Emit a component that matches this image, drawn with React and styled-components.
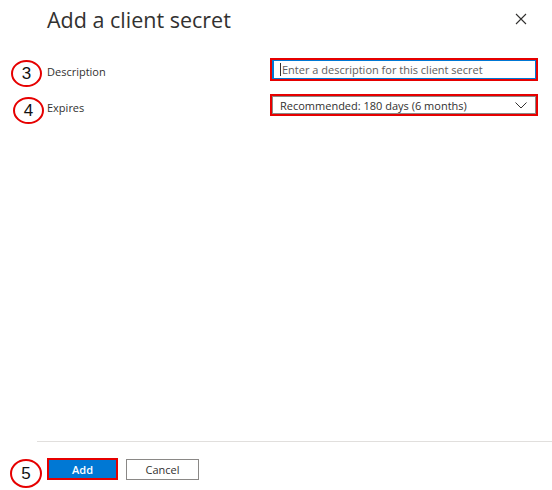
import React from "react";
import styled, { createGlobalStyle } from "styled-components";

const Global = createGlobalStyle`
  html, body { margin: 0; padding: 0; background: #fff; }
  body { font-family: "Segoe UI", "Open Sans", "Noto Sans", sans-serif; color: #323130; }
  #root { height: 100vh; }
`;

const Panel = styled.div`
  height: 100%;
  display: flex;
  flex-direction: column;
  box-sizing: border-box;
`;

const Header = styled.header`
  display: flex;
  align-items: center;
  justify-content: space-between;
  height: 38px;
  padding: 0 24px 0 47px;
`;

const Title = styled.h1`
  margin: 0;
  font-size: 21.5px;
  font-weight: 400;
  color: #323130;
`;

const CloseButton = styled.button`
  width: 14px;
  height: 14px;
  padding: 0;
  border: 0;
  background: none;
  display: flex;
  align-items: center;
  justify-content: center;
  cursor: pointer;
`;

const Form = styled.div`
  display: flex;
  flex-direction: column;
  gap: 13px;
  padding-top: 20px;
`;

const Row = styled.div`
  display: grid;
  grid-template-columns: 47px 223px 268px;
  grid-template-rows: ${(p) => p.$h}px;
  align-items: center;
`;

/* numbered red callout circle */
const Marker = styled.span`
  box-sizing: border-box;
  width: ${(p) => p.$w ?? 31}px;
  height: ${(p) => p.$h ?? 27}px;
  margin-left: ${(p) => p.$x ?? 11}px;
  margin-top: ${(p) => p.$y ?? 0}px;
  align-self: start;
  border: 2px solid #e60000;
  border-radius: 50%;
  background: #fff;
  display: flex;
  align-items: center;
  justify-content: center;
  font-family: "Liberation Sans", Arial, sans-serif;
  font-size: 17px;
  color: #111;
  flex-shrink: 0;
`;

const Label = styled.label`
  font-size: 11px;
  color: #323130;
  padding-top: 4px;
`;

const Highlight = styled.div`
  box-sizing: border-box;
  border: 2px solid #e60000;
  height: 100%;
  display: flex;
`;

const TextBox = styled.div`
  flex: 1;
  box-sizing: border-box;
  border: 1px solid #0078d4;
  border-left-width: 2px;
  display: flex;
  align-items: center;
  padding-left: 6px;
  font-size: 11px;
  color: #605e5c;
`;

const Caret = styled.span`
  width: 1px;
  height: 13px;
  background: #323130;
  margin-right: 1px;
`;

const Select = styled.div`
  flex: 1;
  box-sizing: border-box;
  border: 1px solid #8a8886;
  display: flex;
  align-items: center;
  justify-content: space-between;
  padding: 0 8px 0 7px;
  font-size: 11px;
  color: #323130;
`;

const Spacer = styled.div`
  flex: 1;
`;

const Footer = styled.footer`
  margin-left: 37px;
  border-top: 1px solid #e1dfdd;
  height: 49px;
  box-sizing: border-box;
  padding-top: 16px;
`;

const FooterInner = styled.div`
  margin-left: -37px;
  display: flex;
  align-items: flex-start;
`;

const Buttons = styled.div`
  display: flex;
  align-items: flex-start;
  gap: 8px;
  margin-left: 5px;
`;

const PrimaryFrame = styled.div`
  box-sizing: border-box;
  border: 2px solid #e60000;
  width: 71px;
  height: 22px;
  display: flex;
`;

const PrimaryButton = styled.button`
  flex: 1;
  border: 0;
  background: #0078d4;
  color: #fff;
  font: 600 11px "Segoe UI", "Open Sans", sans-serif;
  padding: 0;
`;

const SecondaryButton = styled.button`
  box-sizing: border-box;
  width: 73px;
  height: 21px;
  margin-top: 1px;
  border: 1px solid #8a8886;
  background: #fff;
  color: #323130;
  font: 400 11px "Segoe UI", "Open Sans", sans-serif;
  padding: 0;
`;

export default function App() {
  return (
    <>
      <Global />
      <Panel>
        <Header>
          <Title>Add a client secret</Title>
          <CloseButton aria-label="Close">
            <svg width="12" height="12" viewBox="0 0 12 12">
              <path d="M1 1 L11 11 M11 1 L1 11" stroke="#323130" strokeWidth="1.1" fill="none" />
            </svg>
          </CloseButton>
        </Header>
        <Form>
          <Row $h={23}>
            <Marker $x={11} $y={2} $h={27}>3</Marker>
            <Label>Description</Label>
            <Highlight>
              <TextBox>
                <Caret />
                Enter a description for this client secret
              </TextBox>
            </Highlight>
          </Row>
          <Row $h={22}>
            <Marker $x={13} $y={3} $h={27}>4</Marker>
            <Label>Expires</Label>
            <Highlight>
              <Select>
                Recommended: 180 days (6 months)
                <svg width="12" height="7" viewBox="0 0 12 7">
                  <path d="M0.5 0.5 L6 6 L11.5 0.5" stroke="#323130" strokeWidth="1" fill="none" />
                </svg>
              </Select>
            </Highlight>
          </Row>
        </Form>
        <Spacer />
        <Footer>
          <FooterInner>
            <Marker $x={10} $y={1} $w={32} $h={29}>5</Marker>
            <Buttons>
              <PrimaryFrame>
                <PrimaryButton>Add</PrimaryButton>
              </PrimaryFrame>
              <SecondaryButton>Cancel</SecondaryButton>
            </Buttons>
          </FooterInner>
        </Footer>
      </Panel>
    </>
  );
}
